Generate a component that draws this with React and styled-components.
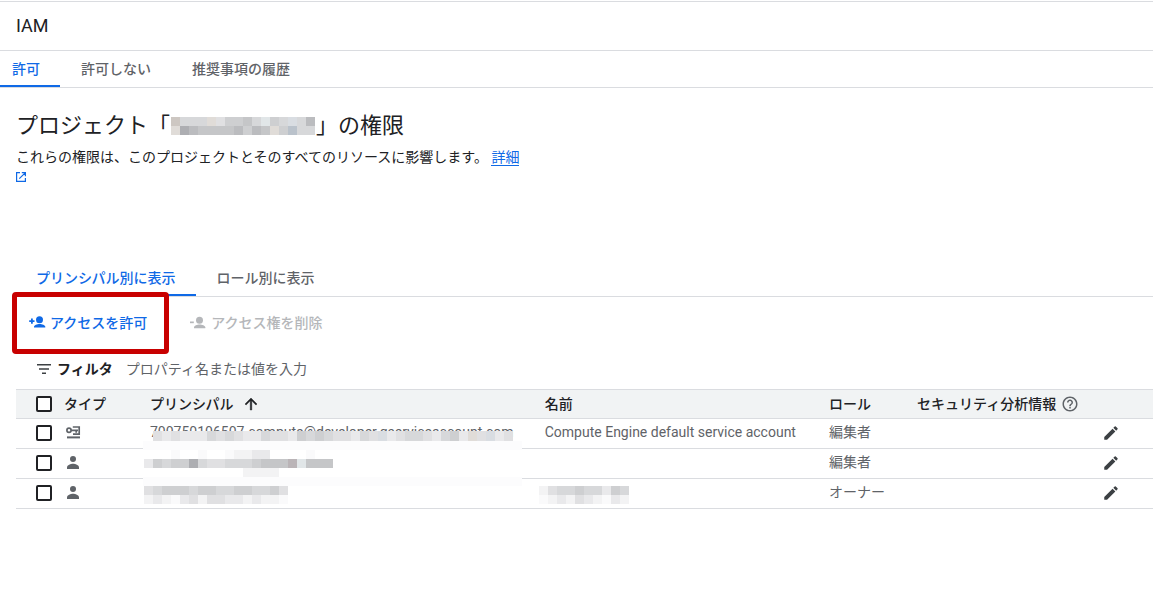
import styled, { createGlobalStyle } from "styled-components"

const GlobalStyle = createGlobalStyle`
* {
    box-sizing: border-box;
}
body {
    margin: 0;
    background-color: #fff;
    color: #202124;
    font-family: Roboto, "Noto Sans CJK JP", sans-serif;
    font-size: 14px;
    line-height: 20px;
}
button, input {
    font: inherit;
}
svg {
    display: block;
    flex-shrink: 0;
}
`
const Page = styled.div`
padding-top: 1px;
`
const Header = styled.header`
border-top: 1px solid #dadce0;
border-bottom: 1px solid #dadce0;
padding: 12px 16px;
`
const Product = styled.h1`
margin: 0;
font-size: 18px;
font-weight: 400;
line-height: 24px;
`
const Tabs = styled.div`
display: flex;
gap: 1px;
border-bottom: 1px solid #dadce0;
`
const Tab = styled.button`
border: none;
border-bottom: 2px solid ${(props) => (props.$active ? "#0f69e6" : "transparent")};
background: none;
padding: 8px 20px 6px;
padding-left: ${(props) => (props.$first ? "12px" : "20px")};
font-weight: 500;
color: ${(props) => (props.$active ? "#0f69e6" : "#5f6368")};
cursor: pointer;
`
const Intro = styled.section`
padding: 23px 16px 73px;
`
const Title = styled.h2`
display: flex;
align-items: center;
gap: 1px;
margin: 0;
font-size: 22px;
font-weight: 400;
line-height: 30px;
`
const Desc = styled.p`
max-width: 512px;
margin: 6px 0 0;
`
const MoreLink = styled.a`
color: #0f69e6;
text-decoration: none;
svg {
    display: inline-block;
}
`
const LinkText = styled.span`
border-bottom: 1px solid #0f69e6;
`
const Content = styled.main`
padding-left: 16px;
`
const Toolbar = styled.div`
display: flex;
align-items: center;
gap: 42px;
padding: 16px 12px;
`
const Action = styled.button`
position: relative;
display: flex;
align-items: center;
gap: 4px;
border: none;
background: none;
padding: 0;
font-weight: 500;
color: #0f69e6;
cursor: pointer;
&:disabled{
    color: #b5b7ba;
    cursor: default;
}
`
const Highlight = styled.span`
position: absolute;
inset: -21px -22px -21px -16px;
border: 5px solid #c80000;
border-radius: 4px;
pointer-events: none;
`
const FilterBar = styled.div`
display: flex;
align-items: center;
gap: 5px;
padding: 10px 20px;
`
const FilterLabel = styled.label`
font-weight: 700;
`
const FilterInput = styled.input`
flex: 1;
border: none;
outline: none;
padding: 0 8px;
&::placeholder{
    color: #5f6368;
    opacity: 1;
}
`
const Table = styled.table`
width: 100%;
table-layout: fixed;
border-collapse: collapse;
`
const Col = styled.col`
width: ${(props) => props.$width};
`
const HeadRow = styled.tr`
height: 29px;
background-color: #f1f3f4;
border-top: 1px solid #dadce0;
border-bottom: 1px solid #dadce0;
`
const Row = styled.tr`
height: 30px;
border-bottom: 1px solid #dadce0;
`
const Th = styled.th`
padding: 0;
text-align: left;
font-weight: 500;
white-space: nowrap;
`
const Td = styled.td`
position: relative;
padding: 0 0 4px;
color: #5f6368;
white-space: nowrap;
`
const IconTd = styled(Td)`
padding: 0 0 2px;
`
const MosaicTd = styled(Td)`
padding: ${(props) => (props.$low ? "3px 0 0" : "0")};
`
const HeadLabel = styled.span`
display: flex;
align-items: center;
gap: 5px;
`
const SortButton = styled.button`
display: flex;
align-items: center;
gap: 8px;
border: none;
background: none;
padding: 0;
font-weight: 500;
color: inherit;
cursor: pointer;
`
const Checkbox = styled.input`
appearance: none;
display: block;
width: 16px;
height: 16px;
margin: 0 0 0 20px;
border: 2px solid #202124;
border-radius: 2px;
background-color: #fff;
`
const EditButton = styled.button`
display: block;
border: none;
background: none;
padding: 0;
color: #3c4043;
cursor: pointer;
`
const MosaicGrid = styled.div`
display: grid;
grid-template-columns: repeat(${(props) => props.$columns}, 9px);
grid-auto-rows: ${(props) => (props.$tall ? "11px" : "9px")};
margin-left: ${(props) => (props.$pull ? "-6px" : "0")};
`
const Cell = styled.span`
background-color: ${(props) => props.$color};
`
const OverText = styled.div`
position: absolute;
left: 3px;
top: 12px;
`
const Cover = styled.div`
position: absolute;
left: -7px;
bottom: ${(props) => (props.$low ? "-8px" : "-2px")};
width: 379px;
height: 9px;
background-color: #fcfcfd;
`

const palette = {
  ".": "transparent",
  0: "#fafafb",
  1: "#f3f3f4",
  2: "#e9e9eb",
  3: "#e0e0e2",
  4: "#d7d8da",
  5: "#cecfd1",
  6: "#c5c6c8",
  7: "#bbbcbf",
  8: "#adaeb2",
  a: "#e0dcd8",
  b: "#d9dde2",
  c: "#cdc7c2",
  d: "#bac2cb",
  e: "#e1e6e8",
  f: "#bab4b7",
}

const titleMosaic = ["c444a35564e54b47", "a8766667576a5d44"]
const emailMosaic = ["3232224343224332545433243b234432452a3b23"]
const nameMosaic = ["...0..0..01122....0..", "2545584334445666fe666", "...........1111......"]
const ownerMosaic = ["3455545544554453", "1210231332212110"]
const ownerNameMosaic = ["1344544254", "0121321021"]

const Mosaic = ({ rows, tall, pull }) => (
  <MosaicGrid $columns={rows[0].length} $tall={tall} $pull={pull} aria-hidden="true">
    {rows.join("").split("").map((key, i) => (
      <Cell key={i} $color={palette[key]} />
    ))}
  </MosaicGrid>
)

const PersonAddIcon = () => (
  <svg width="18" height="14" viewBox="0 0 18 14" fill="currentColor">
    <path d="M3 2.5h1.8v1.7h1.7V6H4.800v1.800H3V6H1.200V4.200H3z" />
    <circle cx="11.500" cy="3.800" r="3.500" />
    <path d="M6 11.600v-.9c0-1.700 3.200-2.800 5.600-2.800s5.700 1.100 5.700 2.800v.9z" />
  </svg>
)

const PersonRemoveIcon = () => (
  <svg width="18" height="14" viewBox="0 0 18 14" fill="currentColor">
    <path d="M1 5.500h3.800v1.700H1z" />
    <circle cx="10.500" cy="4.300" r="3.500" />
    <path d="M5 12.200v-.9c0-1.700 3.200-2.800 5.600-2.800s5.700 1.100 5.700 2.800v.9z" />
  </svg>
)

const PersonIcon = () => (
  <svg width="18" height="18" viewBox="0 0 18 18" fill="currentColor">
    <circle cx="9" cy="4.900" r="3" />
    <path d="M3 15v-1.800c0-2.200 3.800-3.500 6-3.500s6 1.300 6 3.500V15z" />
  </svg>
)

const ServiceIcon = () => (
  <svg width="18" height="18" viewBox="0 0 18 18" fill="none" stroke="currentColor" strokeWidth="1.700">
    <circle cx="5" cy="6.300" r="2.100" />
    <path d="M7 6.300h7M12.200 6.300v2.500M8.800 3h6.400v7.200H9" />
    <path d="M3 13.400h13" strokeWidth="2" />
  </svg>
)

const OpenIcon = () => (
  <svg width="10" height="10" viewBox="0 0 10 10" fill="none" stroke="currentColor" strokeWidth="1.200">
    <path d="M4 .6H.6v8.800h8.800V6M5.800.6h3.600v3.600M9.200.8 3.300 6.700" />
  </svg>
)

const FilterIcon = () => (
  <svg width="16" height="16" viewBox="0 0 16 16" fill="#3c4043">
    <path d="M1 3h14v1.500H1zM3 7.300h10v1.500H3zM6 11.600h4v1.500H6z" />
  </svg>
)

const ArrowUpIcon = () => (
  <svg width="18" height="18" viewBox="0 0 24 24" fill="currentColor">
    <path d="m4 12 1.410 1.410L11 7.830V20h2V7.830l5.580 5.590L20 12l-8-8z" stroke="currentColor" strokeWidth=".6" />
  </svg>
)

const HelpIcon = () => (
  <svg width="18" height="18" viewBox="0 0 24 24" fill="#5f6368">
    <path d="M11 18h2v-2h-2v2zm1-16C6.480 2 2 6.480 2 12s4.480 10 10 10 10-4.480 10-10S17.520 2 12 2zm0 18c-4.410 0-8-3.590-8-8s3.590-8 8-8 8 3.590 8 8-3.590 8-8 8zm0-14c-2.210 0-4 1.790-4 4h2c0-1.100.9-2 2-2s2 .9 2 2c0 2-3 1.750-3 5h2c0-2.250 3-2.500 3-5 0-2.210-1.790-4-4-4z" />
  </svg>
)

const EditIcon = () => (
  <svg width="18" height="18" viewBox="0 0 24 24" fill="currentColor">
    <path d="M3 17.250V21h3.750L17.810 9.940l-3.750-3.750L3 17.250zM20.710 7.040c.39-.39.39-1.020 0-1.410l-2.340-2.340a.996.996 0 0 0-1.410 0l-1.830 1.830 3.750 3.750 1.830-1.830z" />
  </svg>
)

const SelectCell = () => (
  <IconTd><Checkbox type="checkbox" aria-label="選択" /></IconTd>
)

const EditCell = () => (
  <IconTd><EditButton aria-label="編集"><EditIcon /></EditButton></IconTd>
)

const App = () => {
  return (
    <Page>
      <GlobalStyle />
      <Header>
        <Product>IAM</Product>
      </Header>
      <Tabs>
        <Tab $active $first>許可</Tab>
        <Tab>許可しない</Tab>
        <Tab>推奨事項の履歴</Tab>
      </Tabs>
      <Intro>
        <Title>プロジェクト「<Mosaic rows={titleMosaic} />」の権限</Title>
        <Desc>
          これらの権限は、このプロジェクトとそのすべてのリソースに影響します。{" "}
          <MoreLink href="#"><LinkText>詳細</LinkText> <OpenIcon /></MoreLink>
        </Desc>
      </Intro>
      <Content>
        <Tabs>
          <Tab $active>プリンシパル別に表示</Tab>
          <Tab>ロール別に表示</Tab>
        </Tabs>
        <Toolbar>
          <Action><PersonAddIcon />アクセスを許可<Highlight /></Action>
          <Action disabled><PersonRemoveIcon />アクセス権を削除</Action>
        </Toolbar>
        <FilterBar>
          <FilterIcon />
          <FilterLabel htmlFor="filter">フィルタ</FilterLabel>
          <FilterInput id="filter" placeholder="プロパティ名または値を入力" />
        </FilterBar>
        <Table>
          <colgroup>
            <Col $width="48px" />
            <Col $width="86px" />
            <Col />
            <Col $width="25%" />
            <Col $width="88px" />
            <Col $width="185px" />
            <Col $width="51px" />
          </colgroup>
          <thead>
            <HeadRow>
              <Th><Checkbox type="checkbox" aria-label="すべて選択" /></Th>
              <Th>タイプ</Th>
              <Th><SortButton>プリンシパル<ArrowUpIcon /></SortButton></Th>
              <Th>名前</Th>
              <Th>ロール</Th>
              <Th><HeadLabel>セキュリティ分析情報<HelpIcon /></HeadLabel></Th>
              <Th />
            </HeadRow>
          </thead>
          <tbody>
            <Row>
              <SelectCell />
              <IconTd><ServiceIcon /></IconTd>
              <Td>
                700750106507-compute@developer.gserviceaccount.com
                <OverText><Mosaic rows={emailMosaic} tall /></OverText>
                <Cover />
              </Td>
              <Td>Compute Engine default service account</Td>
              <Td>編集者</Td>
              <Td />
              <EditCell />
            </Row>
            <Row>
              <SelectCell />
              <IconTd><PersonIcon /></IconTd>
              <MosaicTd>
                <Mosaic rows={nameMosaic} pull />
                <Cover $low />
              </MosaicTd>
              <Td />
              <Td>編集者</Td>
              <Td />
              <EditCell />
            </Row>
            <Row>
              <SelectCell />
              <IconTd><PersonIcon /></IconTd>
              <MosaicTd $low><Mosaic rows={ownerMosaic} pull /></MosaicTd>
              <MosaicTd $low><Mosaic rows={ownerNameMosaic} pull /></MosaicTd>
              <Td>オーナー</Td>
              <Td />
              <EditCell />
            </Row>
          </tbody>
        </Table>
      </Content>
    </Page>
  )
}

export default App
